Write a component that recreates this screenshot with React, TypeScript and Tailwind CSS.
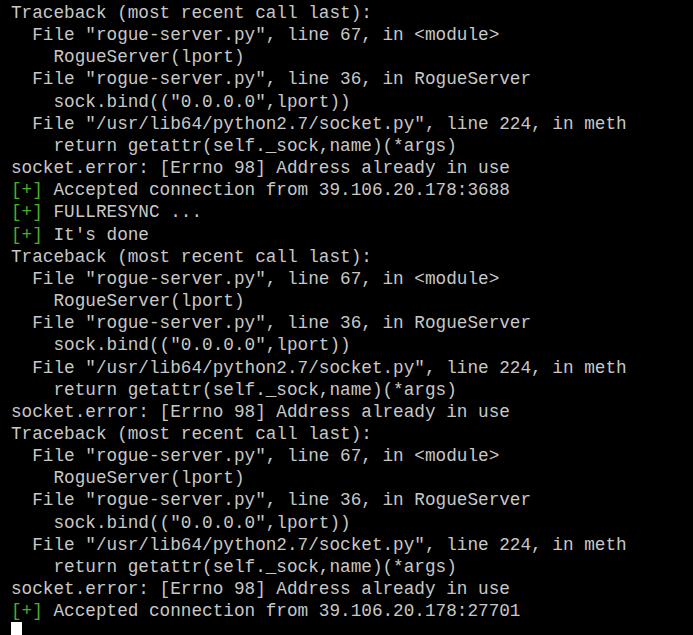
import React from "react";

const lines: (string | { g: string })[] = [
  "Traceback (most recent call last):",
  '  File "rogue-server.py", line 67, in <module>',
  "    RogueServer(lport)",
  '  File "rogue-server.py", line 36, in RogueServer',
  '    sock.bind(("0.0.0.0",lport))',
  '  File "/usr/lib64/python2.7/socket.py", line 224, in meth',
  "    return getattr(self._sock,name)(*args)",
  "socket.error: [Errno 98] Address already in use",
  { g: " Accepted connection from 39.106.20.178:3688" },
  { g: " FULLRESYNC ..." },
  { g: " It's done" },
  "Traceback (most recent call last):",
  '  File "rogue-server.py", line 67, in <module>',
  "    RogueServer(lport)",
  '  File "rogue-server.py", line 36, in RogueServer',
  '    sock.bind(("0.0.0.0",lport))',
  '  File "/usr/lib64/python2.7/socket.py", line 224, in meth',
  "    return getattr(self._sock,name)(*args)",
  "socket.error: [Errno 98] Address already in use",
  "Traceback (most recent call last):",
  '  File "rogue-server.py", line 67, in <module>',
  "    RogueServer(lport)",
  '  File "rogue-server.py", line 36, in RogueServer',
  '    sock.bind(("0.0.0.0",lport))',
  '  File "/usr/lib64/python2.7/socket.py", line 224, in meth',
  "    return getattr(self._sock,name)(*args)",
  "socket.error: [Errno 98] Address already in use",
  { g: " Accepted connection from 39.106.20.178:27701" },
];

export default function App() {
  return (
    <div className="w-[693px] h-[635px] bg-black overflow-hidden">
      <div
        className="pl-[11px] pt-[2px] text-[17.7px] leading-[22.15px] text-[#c8c8c8] whitespace-pre"
        style={{ fontFamily: '"Liberation Mono", "Courier New", monospace' }}
      >
        {lines.map((l, i) =>
          typeof l === "string" ? (
            <div key={i}>{l}</div>
          ) : (
            <div key={i}>
              <span className="text-[#4caf2a]">[+]</span>
              {l.g}
            </div>
          )
        )}
        <div className="h-[22px] flex items-start pl-[-1px]">
          <span className="inline-block w-[11px] h-[18px] bg-white"></span>
        </div>
      </div>
    </div>
  );
}
